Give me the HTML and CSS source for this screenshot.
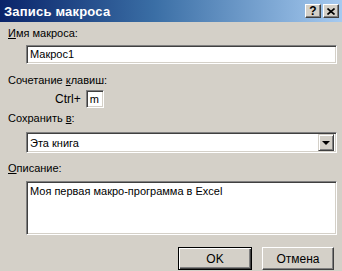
FILE: index.html
```html
<!DOCTYPE html>
<html lang="ru">
<head>
  <meta charset="UTF-8" />
  <title>Запись макроса</title>
  <link rel="stylesheet" href="styles.css">
</head>
<body>
  <div class="dialog">
    <div class="titlebar">
      <span class="title">Запись макроса</span>
      <div class="title-btns">
        <span class="tbtn">?</span>
        <span class="tbtn close">
          <svg width="8" height="7" viewBox="0 0 8 7"><path d="M0.5 0.5 L7.5 6.5 M7.5 0.5 L0.5 6.5" stroke="#000" stroke-width="1.6"/></svg>
        </span>
      </div>
    </div>

    <div class="content">
      <div class="label"><u>И</u>мя макроса:</div>
      <div class="field name-field">Макрос1</div>

      <div class="label gap-lg">Сочетание <u>к</u>лавиш:</div>
      <div class="hotkey-row">
        <span class="ctrl">Ctrl+</span>
        <div class="field key-field">m</div>
      </div>

      <div class="label gap-sm">Сохранить <u>в</u>:</div>
      <div class="field select-field">
        <span class="select-text">Эта книга</span>
        <span class="select-btn"><span class="arrow"></span></span>
      </div>

      <div class="label gap-md"><u>О</u>писание:</div>
      <div class="field desc-field">Моя первая макро-программа в Excel</div>

      <div class="buttons">
        <div class="btn default">OK</div>
        <div class="btn">Отмена</div>
      </div>
    </div>
  </div>
</body>
</html>
```

FILE: styles.css
```css
body {
  margin: 0;
  background-color: #d4d0c8;
  font-family: 'Liberation Sans', Arial, sans-serif;
  font-size: 11px;
  color: #000;
}

.dialog {
  width: 342px;
  height: 271px;
  background-color: #d4d0c8;
  overflow: hidden;
}

.titlebar {
  height: 22px;
  display: flex;
  align-items: center;
  padding: 0 3px 0 4px;
  background: linear-gradient(90deg, #0a246a 0%, #3a6ea5 45%, #a6caf0 100%);
}

.title {
  color: #fff;
  font-weight: bold;
  font-size: 13px;
  letter-spacing: 0.2px;
}

.title-btns {
  margin-left: auto;
  display: flex;
  gap: 2px;
}

.tbtn {
  box-sizing: border-box;
  width: 16px;
  height: 14px;
  background-color: #d4d0c8;
  border-top: 1px solid #fff;
  border-left: 1px solid #fff;
  border-right: 1px solid #404040;
  border-bottom: 1px solid #404040;
  box-shadow: inset -1px -1px #808080;
  font-weight: bold;
  font-size: 12px;
  line-height: 12px;
  text-align: center;
  color: #000;
  display: flex;
  align-items: center;
  justify-content: center;
}

.content {
  padding: 0 5px 0 8px;
}

.label {
  height: 13px;
  line-height: 13px;
  margin-top: 5px;
  white-space: nowrap;
}

.gap-lg {
  margin-top: 10px;
}

.gap-sm {
  margin-top: 5px;
}

.gap-md {
  margin-top: 9px;
}

.field {
  box-sizing: border-box;
  background-color: #fff;
  border-top: 1px solid #808080;
  border-left: 1px solid #808080;
  border-right: 1px solid #fff;
  border-bottom: 1px solid #fff;
  box-shadow: inset 1px 1px #404040, inset -1px -1px #d4d0c8;
  padding: 0 3px;
  white-space: nowrap;
}

.name-field {
  margin: 5px 0 0 18px;
  height: 19px;
  line-height: 17px;
}

.hotkey-row {
  display: flex;
  align-items: center;
  gap: 5px;
  margin: 3px 0 0 47px;
  height: 17px;
}

.ctrl {
  font-size: 12px;
}

.key-field {
  width: 18px;
  height: 18px;
  line-height: 16px;
}

.select-field {
  margin: 7px 0 0 18px;
  height: 21px;
  display: flex;
  align-items: center;
  padding: 0 2px 0 3px;
}

.select-text {
  flex: 1;
}

.select-btn {
  width: 16px;
  height: 17px;
  box-sizing: border-box;
  background-color: #d4d0c8;
  border-top: 1px solid #d4d0c8;
  border-left: 1px solid #d4d0c8;
  border-right: 1px solid #404040;
  border-bottom: 1px solid #404040;
  box-shadow: inset 1px 1px #fff, inset -1px -1px #808080;
  display: flex;
  align-items: center;
  justify-content: center;
}

.arrow {
  width: 0;
  height: 0;
  border-left: 4px solid transparent;
  border-right: 4px solid transparent;
  border-top: 4px solid #000;
}

.desc-field {
  margin: 6px 0 0 18px;
  height: 54px;
  line-height: 14px;
  padding-top: 2px;
}

.buttons {
  display: flex;
  justify-content: flex-end;
  gap: 10px;
  margin-top: 12px;
  padding-right: 3px;
}

.btn {
  box-sizing: border-box;
  width: 72px;
  height: 23px;
  background-color: #d4d0c8;
  border-top: 1px solid #fff;
  border-left: 1px solid #fff;
  border-right: 1px solid #404040;
  border-bottom: 1px solid #404040;
  box-shadow: inset -1px -1px #808080;
  display: flex;
  align-items: center;
  justify-content: center;
  font-size: 12px;
}

.btn.default {
  border: 1px solid #000;
  box-shadow: inset 1px 1px #fff, inset -1px -1px #404040, inset -2px -2px #808080;
  width: 74px;
}
```
